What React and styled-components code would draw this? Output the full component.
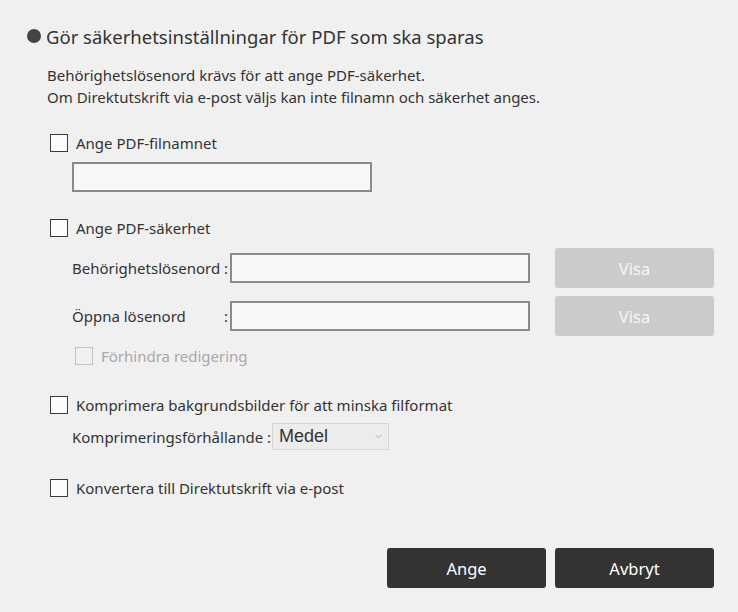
import styled, { createGlobalStyle } from 'styled-components';

const Global = createGlobalStyle`
  html, body {
    margin: 0;
    background: #f0f0f0;
  }
  body {
    font-family: "Noto Sans", "Open Sans", sans-serif;
    color: #333;
  }
`;

const Page = styled.div`
  width: 738px;
  height: 612px;
  box-sizing: border-box;
  padding: 22px 24px 0 0;
  background: #f0f0f0;
`;

const Title = styled.h1`
  display: flex;
  align-items: center;
  gap: 5px;
  margin: 0 0 0 27px;
  height: 28px;
  font-size: 18.5px;
  font-weight: 400;
  color: #333;
`;

const Dot = styled.span`
  width: 14px;
  height: 14px;
  border-radius: 50%;
  background: #444;
`;

const Note = styled.p`
  margin: 14px 0 0 47px;
  font-size: 15px;
  line-height: 22px;
  color: #333;
`;

const CheckRow = styled.label`
  display: flex;
  align-items: center;
  gap: 8px;
  height: 24px;
  margin-top: ${p => p.$top}px;
  margin-left: ${p => p.$indent || 50}px;
  font-size: 15px;
  color: ${p => (p.$disabled ? '#a8a8a8' : '#333')};
`;

const Box = styled.span`
  width: 18px;
  height: 18px;
  box-sizing: border-box;
  border: 1.5px solid ${p => (p.$disabled ? '#c4c4c4' : '#3a3a3a')};
  background: ${p => (p.$disabled ? '#f0f0f0' : '#fcfcfc')};
`;

const TextField = styled.div`
  width: 300px;
  height: 30px;
  box-sizing: border-box;
  border: 2px solid #8a8a8a;
  background: #f8f8f8;
`;

const FileField = styled(TextField)`
  margin: 7px 0 0 72px;
`;

const FieldRow = styled.div`
  display: grid;
  grid-template-columns: 150px 8px 300px 159px;
  align-items: center;
  height: 40px;
  margin: 8px 0 0 72px;
  font-size: 15px;
  color: #333;
  & > :last-child {
    margin-left: 25px;
  }
`;

const Colon = styled.span`
  text-align: center;
`;

const Button = styled.button`
  width: 159px;
  height: 40px;
  border: none;
  border-radius: 3px;
  font-family: "Noto Sans", "Open Sans", sans-serif;
  font-size: 16.5px;
  background: ${p => (p.$dark ? '#333' : '#cbcbcb')};
  color: ${p => (p.$dark ? '#fff' : '#f6f6f6')};
`;

const SelectRow = styled.div`
  display: flex;
  align-items: center;
  gap: 1px;
  height: 27px;
  margin: 6px 0 0 72px;
  font-size: 15px;
`;

const Select = styled.div`
  display: flex;
  align-items: center;
  justify-content: space-between;
  width: 117px;
  height: 27px;
  box-sizing: border-box;
  padding: 0 6px 0 6px;
  border: 1px solid #d6d6d6;
  background: #ececec;
  font-family: "Liberation Sans", Arial, sans-serif;
  font-size: 18px;
  color: #333;
`;

const Footer = styled.div`
  display: flex;
  justify-content: flex-end;
  gap: 9px;
  margin-top: 48px;
`;

const Chevron = () => (
  <svg width="7" height="5" viewBox="0 0 7 5">
    <path d="M0.5 0.8 L3.5 3.8 L6.5 0.8" fill="none" stroke="#aaa" strokeWidth="1" />
  </svg>
);

const PasswordRow = ({ label }) => (
  <FieldRow>
    <span>{label}</span>
    <Colon>:</Colon>
    <TextField />
    <Button>Visa</Button>
  </FieldRow>
);

export default function App() {
  return (
    <Page>
      <Global />
      <Title>
        <Dot />
        Gör säkerhetsinställningar för PDF som ska sparas
      </Title>
      <Note>
        Behörighetslösenord krävs för att ange PDF-säkerhet.
        <br />
        Om Direktutskrift via e-post väljs kan inte filnamn och säkerhet anges.
      </Note>

      <CheckRow $top={23}>
        <Box />
        Ange PDF-filnamnet
      </CheckRow>
      <FileField />

      <CheckRow $top={24}>
        <Box />
        Ange PDF-säkerhet
      </CheckRow>
      <PasswordRow label="Behörighetslösenord" />
      <PasswordRow label="Öppna lösenord" />
      <CheckRow $top={8} $indent={75} $disabled>
        <Box $disabled />
        Förhindra redigering
      </CheckRow>

      <CheckRow $top={25}>
        <Box />
        Komprimera bakgrundsbilder för att minska filformat
      </CheckRow>
      <SelectRow>
        Komprimeringsförhållande :
        <Select>
          Medel
          <Chevron />
        </Select>
      </SelectRow>

      <CheckRow $top={26}>
        <Box />
        Konvertera till Direktutskrift via e-post
      </CheckRow>

      <Footer>
        <Button $dark>Ange</Button>
        <Button $dark>Avbryt</Button>
      </Footer>
    </Page>
  );
}
